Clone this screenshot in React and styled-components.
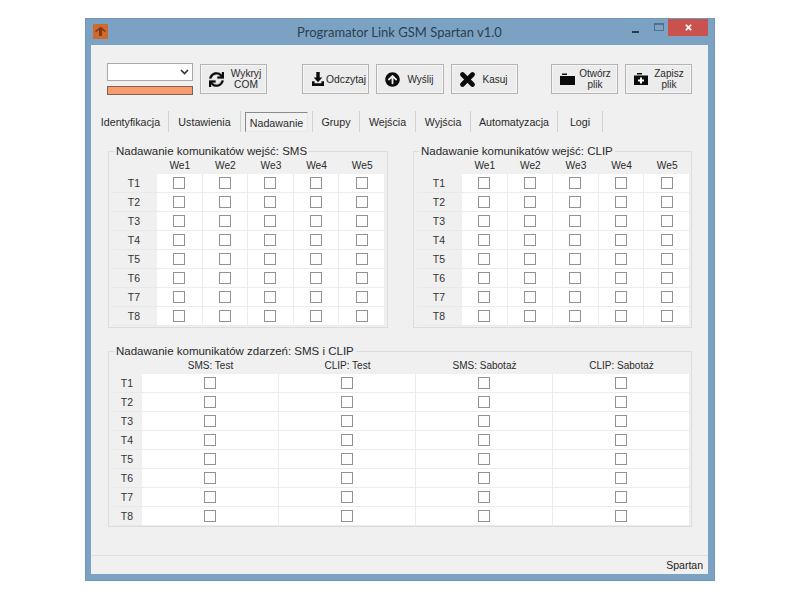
import React from "react";
import styled, { createGlobalStyle } from "styled-components";
import { FaArrowCircleUp, FaTimes, FaSync } from "react-icons/fa";

const Global = createGlobalStyle`
  html, body { margin: 0; background: #fff; }
  body { font-family: "Liberation Sans", Arial, sans-serif; font-size: 11px; color: #222; }
  * { box-sizing: border-box; }
`;
const Page = styled.div`
  width: 800px; height: 600px; padding: 18px 0 0 85px; background: #fff;
`;
const Window = styled.div`
  width: 630px; height: 563px; background: #7ba2c2; padding: 0 6px 6px 5px;
  display: flex; flex-direction: column; border: 1px solid #6f97b8;
`;
const TitleBar = styled.div`
  height: 26px; position: relative; display: flex; align-items: center; justify-content: center; flex: none;
`;
const Title = styled.div`
  font-family: Lato, "Open Sans", sans-serif; font-size: 13px; color: #2b3f50; margin-top: -1px;
`;
const AppIcon = styled.svg`
  position: absolute; left: 2px; top: 5px; width: 15px; height: 15px;
`;
const WinControls = styled.div`
  position: absolute; right: 0; top: 0; display: flex; align-items: flex-start;
`;
const WinBtn = styled.div`
  width: ${p => p.$w}px; height: 17px; display: flex; align-items: center; justify-content: center;
  background: ${p => p.$close ? "#c9524e" : "transparent"}; color: #fff;
`;
const MinGlyph = styled.div`
  width: 7px; height: 2px; background: #26384a; margin-top: 8px;
`;
const MaxGlyph = styled.div`
  width: 10px; height: 8px; border: 1px solid #53708a; border-top-width: 2px; margin-top: -2px;
`;
const Client = styled.div`
  flex: 1; background: #f0f0f0; display: flex; flex-direction: column; min-height: 0;
`;
const Toolbar = styled.div`
  display: flex; align-items: flex-start; padding: 18px 0 0 16px; height: 66px; flex: none;
`;
const ComboCol = styled.div`
  width: 86px; margin-right: 7px; display: flex; flex-direction: column; gap: 5px;
`;
const Combo = styled.div`
  height: 18px; background: #fff; border: 1px solid #a9a9a9; display: flex; align-items: center; justify-content: flex-end; padding-right: 3px;
`;
const Indicator = styled.div`
  height: 9px; background: #fb9a6e; border: 1px solid #77655c;
`;
const Button = styled.div`
  width: ${p => p.$w || 67}px; height: 30px; margin: 1px ${p => p.$mr || 7}px 0 0; flex: none;
  background: #ececec; border: 1px solid #b4b4b4; outline: 1px solid #f5f5f5; outline-offset: -2px;
  display: flex; align-items: center; padding: 0 2px 0 7px;
  font-size: ${p => p.$fs || 10}px; line-height: 11px; color: #2a2a2a; text-align: center;
`;
const IconBox = styled.span`
  width: 16px; display: flex; justify-content: center; color: #0b0b0b; flex: none;
`;
const Label = styled.span`
  flex: 1; white-space: nowrap; margin-left: ${p => p.$ml || 0}px;
`;
const Tabs = styled.div`
  display: flex; align-items: center; height: 21px; margin-left: 2px; flex: none;
`;
const Tab = styled.div`
  width: ${p => p.$w}px; height: 21px; display: flex; align-items: center; justify-content: center; padding-top: 1px;
  border-right: 1px solid #d0d0d0; font-size: 10.7px; color: #2a2a2a; flex: none;
`;
const ActiveTab = styled.div`
  margin: 0 4px; width: 63px; height: 20px; display: flex; align-items: center; justify-content: center; padding-top: 2px;
  border: 1px solid; border-color: #8a8a8a #e8e8e8 #e8e8e8 #8a8a8a; font-size: 10.7px; color: #2a2a2a; flex: none;
  background: #f2f2f2;
`;
const TabEnd = styled.div`
  width: 1px; height: 21px; background: #d0d0d0; flex: none;
`;
const Body = styled.div`
  flex: 1; padding: 19px 0 0 17px; display: flex; flex-direction: column; gap: 23px; min-height: 0;
`;
const TopGroups = styled.div`
  display: flex; gap: 25px;
`;
const Group = styled.div`
  width: ${p => p.$w}px; height: ${p => p.$h}px; border: 1px solid #dcdcdc; position: relative; flex: none;
  padding: ${p => p.$pad};
`;
const Legend = styled.div`
  position: absolute; left: 5px; top: -7px; background: #f0f0f0; padding: 0 2px; font-size: 11.5px; color: #2a2a2a; line-height: 13px; white-space: nowrap;
`;
const Grid = styled.div`
  display: grid; grid-template-columns: ${p => p.$cols}; grid-auto-rows: 19px;
`;
const Head = styled.div`
  display: flex; align-items: center; justify-content: center; font-size: ${p => p.$fs}px; color: #2a2a2a; padding-top: ${p => p.$pt}px;
`;
const RowLabel = styled.div`
  display: flex; align-items: center; justify-content: center; font-size: 10.5px; color: #333; border-bottom: 1px solid #e9e9e9; padding-right: 1px;
`;
const Cell = styled.div`
  background: #fff; display: flex; align-items: center; justify-content: center;
  border-bottom: 1px solid #ececec; border-right: 1px solid #ececec;
`;
const Check = styled.div`
  width: 12px; height: 12px; border: 1px solid #929292; background: #fdfdfd;
`;
const Spacer = styled.div`flex: 1;`;
const StatusBar = styled.div`
  height: 19px; flex: none; border-top: 1px solid #dfdfdf; display: flex; align-items: center; justify-content: flex-end; padding-right: 5px; font-size: 10.5px; color: #222;
`;

const DownloadIcon = () => (
  <svg width="12" height="14" viewBox="0 0 14 15" preserveAspectRatio="none">
    <path d="M5 0h4v6h3L7 11 2 6h3z" fill="currentColor" />
    <path d="M0 10h3v2h8v-2h3v5H0z" fill="currentColor" />
  </svg>
);
const FolderIcon = () => (
  <svg width="15" height="12" viewBox="0 0 15 12">
    <path d="M2 0.5h5v1.5H2zM0 3h15v9H0z" fill="currentColor" />
  </svg>
);
const SaveIcon = () => (
  <svg width="14" height="12" viewBox="0 0 14 12">
    <path d="M3 0h5v1.5H3zM0 2.5h14V12H0z" fill="currentColor" />
    <path d="M6 4.5h2v2h2v2H8v2H6v-2H4v-2h2z" fill="#fff" />
  </svg>
);
const CrossIcon = () => (
  <svg width="15" height="15" viewBox="0 0 15 15">
    <path d="M2.5 2.5L12.5 12.5M12.5 2.5L2.5 12.5" stroke="currentColor" strokeWidth="4.6" strokeLinecap="round" />
  </svg>
);
const Chevron = () => (
  <svg width="9" height="6" viewBox="0 0 9 6"><path d="M1 1l3.5 3.5L8 1" fill="none" stroke="#333" strokeWidth="1.6" /></svg>
);
const SyncIcon = styled(FaSync)`
  stroke: currentColor; stroke-width: 10px;
`;

const rows = ["T1","T2","T3","T4","T5","T6","T7","T8"];
const Matrix = ({ heads, cols, fs, pt }) => (
  <Grid $cols={cols}>
    <Head $fs={fs} $pt={pt} />
    {heads.map(h => <Head key={h} $fs={fs} $pt={pt}>{h}</Head>)}
    {rows.map(r => (
      <React.Fragment key={r}>
        <RowLabel>{r}</RowLabel>
        {heads.map(h => <Cell key={h}><Check /></Cell>)}
      </React.Fragment>
    ))}
  </Grid>
);

const we = ["We1","We2","We3","We4","We5"];

export default function App() {
  return (
    <Page>
      <Global />
      <Window>
        <TitleBar>
          <AppIcon viewBox="0 0 15 15">
            <rect width="15" height="15" rx="1" fill="#d0692c" />
            <path d="M2 7l5-4h1l5 4-1 1-3-2v6H6V6L3 8z" fill="#83381a" />
          </AppIcon>
          <Title>Programator Link GSM Spartan v1.0</Title>
          <WinControls>
            <WinBtn $w={30}><MinGlyph /></WinBtn>
            <WinBtn $w={18}><MaxGlyph /></WinBtn>
            <WinBtn $w={40} $close><FaTimes size={9} /></WinBtn>
          </WinControls>
        </TitleBar>
        <Client>
          <Toolbar>
            <ComboCol>
              <Combo><Chevron /></Combo>
              <Indicator />
            </ComboCol>
            <Button $mr={35} $fs={10.2}>
              <IconBox><SyncIcon size={15} /></IconBox>
              <Label $ml={4}>Wykryj<br />COM</Label>
            </Button>
            <Button $fs={10.3}><IconBox><DownloadIcon /></IconBox><Label>Odczytaj</Label></Button>
            <Button $w={68}><IconBox><FaArrowCircleUp size={15} /></IconBox><Label>Wyślij</Label></Button>
            <Button $mr={33}><IconBox><CrossIcon /></IconBox><Label>Kasuj</Label></Button>
            <Button><IconBox><FolderIcon /></IconBox><Label>Otwórz<br />plik</Label></Button>
            <Button><IconBox><SaveIcon /></IconBox><Label>Zapisz<br />plik</Label></Button>
          </Toolbar>
          <Tabs>
            <Tab $w={76}>Identyfikacja</Tab>
            <Tab $w={72}>Ustawienia</Tab>
            <ActiveTab>Nadawanie</ActiveTab>
            <TabEnd />
            <Tab $w={47}>Grupy</Tab>
            <Tab $w={56}>Wejścia</Tab>
            <Tab $w={55}>Wyjścia</Tab>
            <Tab $w={87}>Automatyzacja</Tab>
            <Tab $w={45}>Logi</Tab>
          </Tabs>
          <Body>
            <TopGroups>
              <Group $w={280} $h={177} $pad="3px 3px 0 3px">
                <Legend>Nadawanie komunikatów wejść: SMS</Legend>
                <Matrix heads={we} cols="45px repeat(5, 45.6px)" fs={10.2} pt={2} />
              </Group>
              <Group $w={279} $h={177} $pad="3px 3px 0 3px">
                <Legend>Nadawanie komunikatów wejść: CLIP</Legend>
                <Matrix heads={we} cols="45px repeat(5, 45.6px)" fs={10.2} pt={2} />
              </Group>
            </TopGroups>
            <Group $w={584} $h={176} $pad="3px 2px 0 4px">
              <Legend>Nadawanie komunikatów zdarzeń: SMS i CLIP</Legend>
              <Matrix heads={["SMS: Test","CLIP: Test","SMS: Sabotaż","CLIP: Sabotaż"]} cols="29px repeat(4, 137px)" fs={10} pt={1} />
            </Group>
          </Body>
          <Spacer />
          <StatusBar>Spartan</StatusBar>
        </Client>
      </Window>
    </Page>
  );
}
